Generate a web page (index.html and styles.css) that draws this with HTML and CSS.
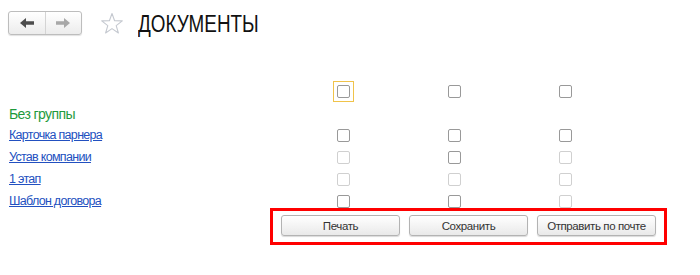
FILE: index.html
```html
<!DOCTYPE html>
<html lang="ru">
<head>
<meta charset="utf-8">
<title>Документы</title>
<link rel="stylesheet" href="styles.css">
</head>
<body>
<div class="page">
  <header class="header">
    <div class="nav">
      <span class="nav-btn">
        <svg width="14" height="10" viewBox="0 0 14 10"><path d="M0 5 L6 0 L6 3.3 L14 3.3 L14 6.7 L6 6.7 L6 10 Z" fill="#4d4d4d"/></svg>
      </span>
      <span class="nav-btn">
        <svg width="14" height="10" viewBox="0 0 14 10"><path d="M14 5 L8 0 L8 3.3 L0 3.3 L0 6.7 L8 6.7 L8 10 Z" fill="#a8a8a8"/></svg>
      </span>
    </div>
    <svg class="star" width="24" height="24" viewBox="0 0 24 24"><path d="M12 1.5 L14.6 8.7 L22.3 8.9 L16.2 13.6 L18.4 21 L12 16.6 L5.6 21 L7.8 13.6 L1.7 8.9 L9.4 8.7 Z" fill="none" stroke="#c5c9d0" stroke-width="1.1" stroke-linejoin="round"/></svg>
    <h1 class="title">ДОКУМЕНТЫ</h1>
  </header>

  <div class="grid">
    <div class="cell label"></div>
    <div class="cell"><span class="focus"><span class="cb"></span></span></div>
    <div class="cell"><span class="cb"></span></div>
    <div class="cell"><span class="cb"></span></div>

    <div class="cell group">Без группы</div>
    <div class="cell gap"></div>
    <div class="cell gap"></div>
    <div class="cell gap"></div>

    <div class="cell label"><a href="#">Карточка парнера</a></div>
    <div class="cell"><span class="cb"></span></div>
    <div class="cell"><span class="cb"></span></div>
    <div class="cell"><span class="cb"></span></div>

    <div class="cell label"><a href="#">Устав компании</a></div>
    <div class="cell"><span class="cb off"></span></div>
    <div class="cell"><span class="cb"></span></div>
    <div class="cell"><span class="cb off"></span></div>

    <div class="cell label"><a href="#">1 этап</a></div>
    <div class="cell"><span class="cb off"></span></div>
    <div class="cell"><span class="cb off"></span></div>
    <div class="cell"><span class="cb off"></span></div>

    <div class="cell label"><a href="#">Шаблон договора</a></div>
    <div class="cell"><span class="cb"></span></div>
    <div class="cell"><span class="cb"></span></div>
    <div class="cell"><span class="cb off"></span></div>
  </div>

  <div class="actions">
    <button class="btn">Печать</button>
    <button class="btn">Сохранить</button>
    <button class="btn">Отправить по почте</button>
  </div>
</div>
</body>
</html>
```

FILE: styles.css
```css
html, body {
  margin: 0;
  padding: 0;
  background: #ffffff;
}
body {
  font-family: "Liberation Sans", Arial, sans-serif;
  color: #333333;
}
.page {
  width: 700px;
  height: 275px;
}
.header {
  display: flex;
  align-items: center;
  padding: 10px 0 0 8px;
  height: 25px;
}
.nav {
  display: flex;
  width: 74px;
  height: 24px;
  border: 1px solid #bdbdbd;
  border-radius: 3px;
  background: linear-gradient(#ffffff, #ececec);
  box-shadow: 0 1px 1px rgba(0,0,0,0.12);
  box-sizing: border-box;
}
.nav-btn {
  flex: 1;
  display: flex;
  align-items: center;
  justify-content: center;
}
.nav-btn + .nav-btn {
  border-left: 1px solid #d4d4d4;
}
.star {
  margin-left: 18px;
  margin-top: 2px;
}
.title {
  margin: 0 0 0 14px;
  font-weight: normal;
  font-size: 23px;
  color: #111111;
  line-height: 25px;
  padding-top: 4px;
  transform: scaleX(0.82);
  transform-origin: left center;
}
.grid {
  display: grid;
  grid-template-columns: 288px 111px 111px 111px;
  grid-auto-rows: 22px;
  margin-top: 45px;
}
.cell {
  display: flex;
  align-items: center;
  justify-content: center;
}
.label, .group {
  justify-content: flex-start;
  padding-left: 9px;
}
.label {
  font-size: 12.5px;
  letter-spacing: -0.7px;
  padding-bottom: 1px;
}
.group {
  color: #1e9a3c;
  font-size: 14px;
  letter-spacing: -0.6px;
  align-items: flex-end;
  padding-bottom: 2px;
}
.label a {
  color: #2250c0;
  text-decoration: underline;
}
.focus {
  display: block;
  padding: 3px;
  border: 1px solid #f0c34a;
}
.cb {
  display: block;
  width: 13px;
  height: 13px;
  box-sizing: border-box;
  border: 1px solid #999999;
  border-radius: 2px;
  background: #ffffff;
}
.cb.off {
  border-color: #d0d0d0;
}
.actions {
  display: flex;
  gap: 9px;
  margin: -4px 0 0 270px;
  width: 397px;
  height: 37px;
  box-sizing: border-box;
  border: 3px solid #ff0000;
  padding: 4px 0 0 8px;
}
.btn {
  width: 119px;
  height: 21px;
  padding: 0;
  border: 1px solid #b3b3b3;
  border-radius: 3px;
  background: linear-gradient(#ffffff, #e9e9e9);
  box-shadow: 0 1px 1px rgba(0,0,0,0.15);
  font-family: "Liberation Sans", Arial, sans-serif;
  font-size: 11.5px;
  letter-spacing: -0.4px;
  color: #333333;
}
```
